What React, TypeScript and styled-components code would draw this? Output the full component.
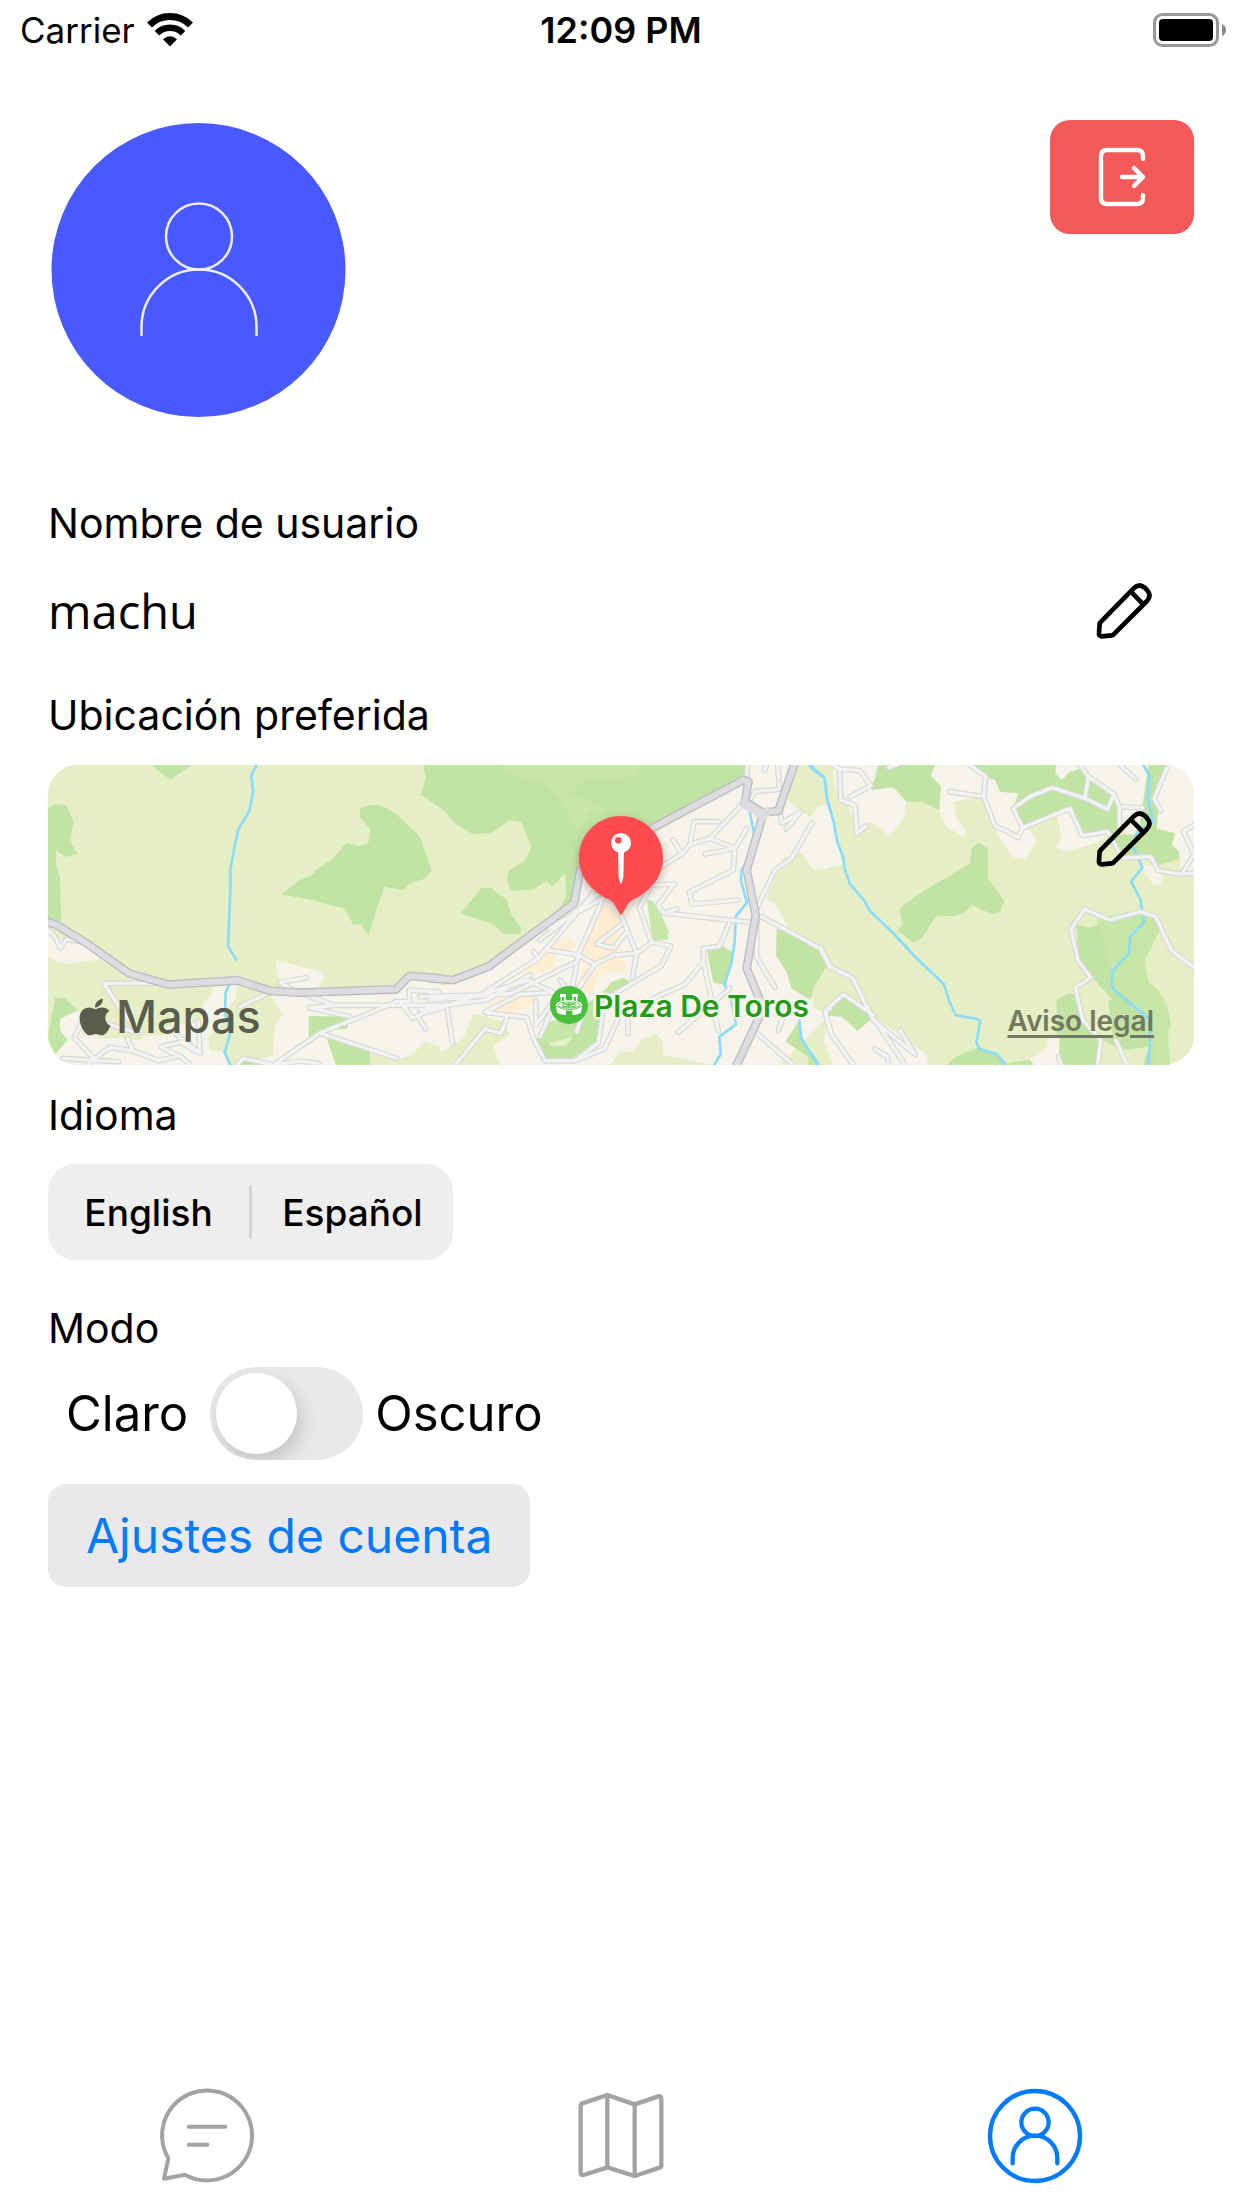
import React, { useState } from "react";
import styled, { createGlobalStyle } from "styled-components";
import { FaApple } from "react-icons/fa";

const blue = "#007aff";
const grey = "#a3a3a3";

const GlobalStyle = createGlobalStyle`
  * { box-sizing: border-box; }
  body { margin: 0; background: #fff; color: #000; font-family: Inter, "Liberation Sans", sans-serif; }
  button { font: inherit; color: inherit; border: 0; background: none; padding: 0; cursor: pointer; }
  p, h2 { margin: 0; }
  svg { display: block; }
`;

const Screen = styled.div`
  display: flex;
  flex-direction: column;
  min-height: 100vh;
`;

const StatusBar = styled.header`
  display: grid;
  grid-template-columns: 1fr auto 1fr;
  align-items: center;
  height: 60px;
  padding: 0 16px;
  font-size: 36px;
  line-height: 60px;
`;

const Carrier = styled.div`
  display: flex;
  align-items: center;
  gap: 12px;
  padding-left: 4px;
  font-size: 35px;
`;

const Clock = styled.time`
  font-weight: 600;
`;

const BatterySlot = styled.div`
  justify-self: end;
`;

const Main = styled.main`
  flex: 1;
  padding: 60px 48px 0;
`;

const ProfileHeader = styled.div`
  display: flex;
  justify-content: space-between;
  align-items: flex-start;
`;

const LogoutButton = styled.button`
  display: grid;
  place-items: center;
  width: 144px;
  height: 114px;
  border-radius: 20px;
  background: #f35959;
`;

const Section = styled.section<{ $space: number; $gap?: number }>`
  display: flex;
  flex-direction: column;
  align-items: stretch;
  gap: ${(p) => p.$gap ?? 24}px;
  margin-top: ${(p) => p.$space}px;
`;

const Label = styled.h2`
  font-size: 41px;
  font-weight: 400;
  line-height: 50px;
`;

const NameRow = styled.div`
  display: flex;
  align-items: center;
  justify-content: space-between;
  height: 78px;
  padding-right: 42px;
`;

const UserName = styled.p`
  font-family: "Open Sans", "Noto Sans", sans-serif;
  font-size: 47px;
  line-height: 64px;
`;

const IconButton = styled.button`
  display: block;
`;

const MapCard = styled.div`
  position: relative;
  height: 300px;
  border-radius: 30px;
  overflow: hidden;
  background: #e5eec5;
`;

const MapCanvas = styled.svg`
  width: 100%;
  height: 100%;
`;

const MapEdit = styled(IconButton)`
  position: absolute;
  top: 46px;
  right: 42px;
`;

const MapBrand = styled.div`
  position: absolute;
  left: 26px;
  bottom: 18px;
  display: flex;
  align-items: center;
  color: #5a5d4b;
  font-size: 45px;
  font-weight: 500;
  line-height: 60px;
`;

const LegalLink = styled.a`
  position: absolute;
  right: 40px;
  bottom: 28px;
  color: #737961;
  font-size: 28px;
  font-weight: 600;
  line-height: 32px;
  text-decoration-thickness: 3px;
  text-underline-offset: 4px;
`;

const PlaceLabel = styled.p`
  position: absolute;
  left: calc(50% - 27px);
  top: 223px;
  color: #229c16;
  font-size: 30px;
  font-weight: 600;
  line-height: 36px;
  white-space: nowrap;
  text-shadow: 0 0 3px #fff, 2px 2px 2px #f6f3ea, -2px -2px 2px #f6f3ea, 2px -2px 2px #f6f3ea, -2px 2px 2px #f6f3ea;
`;

const Segments = styled.div`
  display: flex;
  align-items: center;
  align-self: flex-start;
  height: 96px;
  border-radius: 27px;
  background: #eee;
`;

const Segment = styled.button`
  width: 201px;
  height: 96px;
  font-size: 37px;
  font-weight: 500;
`;

const Divider = styled.span`
  width: 3px;
  height: 54px;
  border-radius: 2px;
  background: #d3d3d4;
`;

const ModeRow = styled.div`
  display: flex;
  align-items: center;
  font-size: 49px;
  line-height: 93px;
  padding-left: 18px;
`;

const Switch = styled.input`
  appearance: none;
  flex: none;
  width: 153px;
  height: 93px;
  margin: 0 12px 0 22px;
  padding: 6px;
  border-radius: 47px;
  background: #e9e9eb;
  overflow: hidden;
  cursor: pointer;

  &::before {
    content: "";
    display: block;
    width: 81px;
    height: 81px;
    border-radius: 50%;
    background: #fff;
    box-shadow: 4px 9px 20px rgba(0, 0, 0, 0.16);
  }
  &:checked { background: #34c759; }
  &:checked::before { margin-left: 60px; }
`;

const SettingsButton = styled.button`
  align-self: flex-start;
  height: 103px;
  margin-top: 10px;
  padding: 0 38px;
  border-radius: 18px;
  background: #e9e9eb;
  color: ${blue};
  font-size: 48px;
`;

const TabBar = styled.nav`
  display: grid;
  grid-template-columns: repeat(3, 1fr);
  padding: 24px 0;
`;

const Tab = styled.button<{ $active?: boolean }>`
  display: grid;
  place-items: center;
  color: ${(p) => (p.$active ? blue : grey)};
`;

const line = {
  fill: "none",
  stroke: "currentColor",
  strokeLinecap: "round",
  strokeLinejoin: "round",
} as const;

const WifiIcon = () => (
  <svg width="46" height="34" viewBox="0 0 46 34" fill="none" stroke="#000" aria-hidden="true">
    <path d="M2.5 12A29 29 0 0 1 43.500 12" strokeWidth="7" />
    <path d="M10 20.200A18.400 18.400 0 0 1 36 20.200" strokeWidth="6.500" />
    <path d="M23 33.500L16 26.200Q23 20.500 30 26.200Z" fill="#000" stroke="none" />
  </svg>
);

const BatteryIcon = () => (
  <svg width="74" height="34" viewBox="0 0 74 34" aria-label="Battery full" role="img">
    <rect x="2.500" y="1.500" width="63" height="31" rx="8" fill="none" stroke="#999" strokeWidth="3" />
    <rect x="7" y="6" width="54" height="22" rx="4" />
    <path d="M70 11Q74 13 74 17T70 23Z" fill="#888" />
  </svg>
);

const Avatar = () => (
  <svg width="300" height="300" viewBox="0 0 300 300" role="img" aria-label="Avatar">
    <circle cx="150.500" cy="150" r="147" fill="#485aff" />
    <g fill="none" stroke="#eef" strokeWidth="2.500" strokeLinecap="round">
      <circle cx="151" cy="116.500" r="33" />
      <path d="M93.500 215V207A57.500 57.500 0 0 1 208.500 207V215" />
    </g>
  </svg>
);

const LogoutIcon = () => (
  <svg {...line} width="50" height="62" viewBox="291 438 150 186" stroke="#fff" strokeWidth="13" aria-hidden="true">
    <path d="M429 477V468Q429 450 411 450H321Q303 450 303 468V594Q303 612 321 612H411Q429 612 429 594V585" />
    <path d="M366 531H429M402 504L429 531L402 558" />
  </svg>
);

const PencilIcon = () => (
  <svg {...line} width="56" height="56" viewBox="134 68 168 168" strokeWidth="14" aria-hidden="true">
    <path d="M147 186L247 84Q263 68 280 82L287 89Q302 106 287 122L187 222Q185 225 181 225L152 228Q142 228 143 218L145 190Q145 188 147 186Z" />
    <path d="M241 96L273 129" />
  </svg>
);

const ChatIcon = () => (
  <svg {...line} width="96" height="96" viewBox="87 83 288 288" strokeWidth="12" aria-hidden="true">
    <path d="M115 294A135 135 0 1 1 165 343L102 355Z" />
    <path d="M176 199H286M176 253H232" />
  </svg>
);

const FoldedMapIcon = () => (
  <svg {...line} width="96" height="96" viewBox="69 83 288 288" strokeWidth="13" aria-hidden="true">
    <path d="M92 136Q92 131 97 129L172 104L254 132L325 108Q334 106 334 115V316Q334 320 329 322L254 347L172 321L101 344Q92 346 92 337Z" />
    <path d="M172 104V321M254 132V347" />
  </svg>
);

const ProfileIcon = () => (
  <svg {...line} width="96" height="96" viewBox="81 83 288 288" strokeWidth="13" aria-hidden="true">
    <circle cx="225" cy="227" r="135" />
    <circle cx="225" cy="186" r="41" />
    <path d="M158 309V293A67 67 0 0 1 292 293V309" />
  </svg>
);

/* The map is drawn as three side by side tiles, three units to a pixel. */
const tiles = ["translate(-24 -30)", "translate(1146 -30)", "translate(2286 -30)"];

const Tiled = ({ paths, ...rest }: { paths: string[] } & React.SVGProps<SVGGElement>) => (
  <g {...rest}>
    {paths.map((d, i) => (
      <path key={i} d={d} transform={tiles[i]} />
    ))}
  </g>
);

const town = [
  "M24 530L75 560L130 570L210 592L170 615L90 627L50 621L24 603ZM24 930V880L50 895L82 855L60 825V792L110 768L180 775L120 832L190 852L245 848L305 858L312 842L380 840L380 815L480 800L490 740L512 722L516 697L592 690L588 730L560 760L540 820L505 845L510 888L550 890L570 930ZM706 616L845 650L852 668L835 695L1070 715L1110 670L1200 672V930H600L700 900L700 860L705 815L727 778L695 725L722 700Z",
  "M-30 690L70 690L175 640L440 450L460 360L940 80L950 30H1095L1070 135L1145 190L1170 155L1200 150V340L1150 345L1110 290L1060 310L1008 432L1040 450L1130 640L1150 760L1200 780L1120 860L1050 930H850L700 900L698 860L680 838L640 850L610 890L570 890L540 930H210L190 870L240 840L220 800L130 775L100 850L20 900L-30 880Z",
  "M70 30H210L185 105L250 97L290 140L280 190L240 242L180 200L150 235L100 120L80 110L70 80ZM0 185L30 150L55 150L98 330L15 345L0 320ZM375 30H490L560 60L570 110L630 115L610 160L635 215L670 235L678 262L645 312L605 305L560 235L540 180L510 125L430 140L435 180L468 232L462 246L410 215L385 165L393 95L363 62ZM738 30H1152V362L1115 365L1107 290L1085 270L1095 235L1045 220L1000 240L930 230L740 100ZM740 180L755 248L738 278L765 290L865 262L900 235L780 150ZM985 325L1045 335L1058 360L1050 392L1030 390ZM55 780L130 790L180 775L350 900L355 930H70L42 860ZM662 912L710 875L715 845L745 842L748 875L780 862L803 875L760 905V930H670ZM0 735L10 760L0 790Z",
];

const woods = [
  "M24 160L45 147L78 150L101 200L90 257L113 296L76 306L48 286V330L60 370L64 500L24 490ZM333 30L391 74L455 30ZM1150 30L1157 70L1142 120L1200 155V30ZM723 419L775 377L820 358L828 345L880 309L919 264L958 273L985 265L991 222L961 188L960 160L985 150L1020 151L1064 173L1138 242L1175 345L1158 370L1110 385L1090 405L1033 395L1010 460L986 543L962 507L940 510L912 458L870 451L820 435ZM45 728L75 730L113 766L60 792V825L82 855L46 897L24 850ZM806 783L935 785L920 822L845 825L806 865ZM860 850L990 890V930H888ZM575 930L610 908L700 930Z",
  "M0 30H945L940 70L670 220L455 350L440 440L375 483L408 425L405 355L367 396L350 377L312 403L243 409L229 367L238 346L284 318L304 275L274 202L238 196L185 233L128 238L72 203L45 170L0 137ZM155 398L187 400L203 416L230 432L244 480L276 520L270 536L222 537L188 508L92 475ZM830 585L872 570L908 590L890 690L850 683ZM1040 520L1170 585L1188 635L1150 700L1140 735L1085 700L1068 648L1038 600ZM1108 795L1120 850L1165 930H1135V905L1066 860ZM530 700L545 680L580 668L606 685L520 760L510 850L430 910L345 910L312 860L360 800L430 780Z",
  "M490 30H738L735 55L755 75L780 50L815 40L915 120L930 240L985 240L1015 30H1075L1035 130L1045 165L1040 222L1095 235L1085 270L1107 290V312L1045 330L1015 305L940 305L890 235L815 240L780 160L635 218L610 160L625 115L570 110L555 75L525 65ZM205 30H375L363 62L393 95L388 165L340 142L290 140L250 97L185 105ZM505 263L533 280L534 370L583 438L570 470L545 477L486 450L465 472L435 482L378 484L335 550L308 562L264 527L277 508L269 465L280 450L330 415L480 326L485 280ZM800 510L840 517L862 512V490L900 495L985 470L1035 485L1050 525L1020 555L1003 620L1015 680L1045 705L1073 755L1083 812L1070 835L1080 930H745L750 850L740 835V735L775 715L800 720L820 800L870 850L910 850L895 738L907 735L845 665L805 610ZM412 930L435 907L505 877L560 897L590 925L660 914L670 930ZM60 765L100 718L175 770L180 795L143 828L95 785L55 782ZM0 565L45 625L10 700L0 740Z",
];

const clearings = [
  "M990 930V895L1075 912L1115 900L1155 860L1200 875V930Z",
  "M357 865L430 845L408 872L365 874Z",
  "M875 855L935 885L1018 875L1000 930H865Z",
];

const glades = ["", "M205 30H628L622 58L570 72L480 66L415 115L512 155L515 185L480 165L440 230L400 140L340 80L275 68L220 52ZM650 432L670 440L698 490L716 528L712 555L668 558ZM330 850L370 795L430 830L425 850L360 865Z", "M862 490L985 470L1035 485L1050 525L1003 620L1015 680L1070 750L1080 930H1040L1035 830L920 700Z"];

const shops = ["", "M520 445L560 470L570 550L590 652L545 650L495 670L490 720L440 700L460 640L455 590L500 480ZM275 655L320 605L410 540L440 575L375 600L378 640L290 665ZM170 740L270 690L330 735L240 778L200 775Z", ""];

const water = [
  "M650 30L634 60L639 110L628 168L594 225L580 295L571 345V410L567 500L564 573L589 614M567 690L557 712L555 770L571 835L554 892L571 930",
  "M958 165L973 240L950 320L934 347L933 378L951 443L917 484L914 560L903 630L883 688L900 720L918 808L868 845L872 897L853 930M1140 30L1184 70L1191 130L1202 170M1108 790L1113 850L1166 930",
  "M0 35L44 70L51 130L71 200L82 262L99 305L105 345L120 387L165 440L180 468L250 535L320 610L402 688L418 740L437 780L500 792L511 797L499 862L508 882L560 897L588 930M1000 30L1019 62L1013 130L1030 200L1012 214L985 225L967 270L997 337L963 380L991 433L1002 502L960 545L957 595L909 645L903 688L912 704L1015 790L1021 855L1014 930M-2 890L26 930",
];

const streets = [
  "M24 525L45 545L61 580L80 553L140 562M385 685H192L230 745L295 834L133 787L103 848L163 912L210 877L280 888L355 917L420 902L450 930M68 910L235 920M163 912L145 930M262 850L280 888M405 835L480 895L475 800M480 895L420 862L362 876L420 905M590 930L610 910L700 930L840 834L1060 745M600 755L690 712M798 668L720 683L775 712L885 751H1200M885 751L808 758L930 785M840 834L1070 910M1195 711L1108 705V740H1065M1085 745L1117 790L1200 750M1135 785L1156 822M700 930L780 918L835 925",
  "M0 712H22M-30 725L150 720L300 675M-30 765L50 750L170 735L300 660M50 750L68 865M0 770L160 715L325 610L490 415M325 610L310 590M330 555L520 405M355 520L520 430L445 600L355 585M0 735L245 715L440 620M445 600L425 710M300 680L370 712L270 718L165 772L290 787L310 850L345 917H435L505 865L520 760L540 725L695 632L722 573L665 562L620 595L550 600L495 628L445 700M445 600L495 628M75 930L165 822L213 835L230 790M317 740L318 810L380 725M330 845L400 690M435 917L523 882L565 790M573 480L620 595L607 670M573 510L500 567L552 580L590 530M665 562L628 457L665 390L733 387L684 450L700 474L740 462M700 474L970 503M695 335L755 297L780 268L840 250L935 150M730 255L755 297M780 268L792 200H865M840 250L915 280L825 297M915 280L950 220M915 280L910 345L778 412L787 447L925 435M900 500L868 575L820 580V620L865 828M820 620L765 688L592 765L595 835M900 700L745 832M995 485L1170 580L1200 630M975 470L1035 345L1085 310L1145 205M1050 170L1055 205L1110 172L1068 222M960 135L975 110L1048 103L1043 30M980 490V608L1035 697M975 830L1090 930M1045 825L1065 770M953 30L945 140M1003 45L1010 30M390 675L460 770L440 830M1200 760L1185 770L1200 830",
  "M70 30L88 42L150 47L183 92L120 125M88 42L93 135L135 152L141 235L168 213M235 37L260 30M480 30L527 65L521 125L418 110M521 125L555 213L590 228L623 248L638 218L780 160L817 242L893 230L938 309L1022 305L1045 347L1115 358L1152 354M638 218L610 160L660 125L727 98L825 130L892 163L912 118L835 65L810 30M825 130L835 65M912 118L928 155L998 159M928 155V215M930 30L977 72M1075 30L1032 130L1052 167M1152 210L1120 229L1152 298L1115 358M0 565L33 580L58 635L128 668L190 795L315 898L270 825M195 795L285 930M190 780L100 718L45 768L66 840L130 930M195 882L232 905L236 930M1152 637L1085 587L1037 485L990 470L900 495L823 463L783 523L803 615L843 668L796 697L818 795L872 855L863 930M918 855L950 930M745 905L755 930",
];

const highways = [
  "M20 500L50 510L140 565L267 655L385 689L592 676L693 708L780 713L1068 703L1108 663L1200 670",
  "M0 670L70 675L175 635L433 444L450 345M600 262L675 215L940 75M940 75L955 80L945 140L1000 175L950 345L977 480L950 640L1000 760L920 930M1000 172L1045 168L1092 30",
  "",
];

const MapArtwork = () => (
  <MapCanvas viewBox="0 0 3438 900" preserveAspectRatio="xMidYMid slice" aria-hidden="true">
    <rect width="3438" height="900" fill="#e5eec5" />
    <Tiled paths={town} fill="#f6f3ea" />
    <Tiled paths={woods} fill="#c1e4a5" />
    <Tiled paths={glades} fill="#c6e7a8" />
    <Tiled paths={clearings} fill="#e5eec5" />
    <Tiled paths={shops} fill="#fdeed3" />
    <g fill="none" strokeLinecap="round" strokeLinejoin="round">
      <Tiled paths={water} stroke="#8bdcfb" strokeWidth="8" />
      <Tiled paths={streets} stroke="#d6d9d5" strokeWidth="17" />
      <Tiled paths={streets} stroke="#f1f3f3" strokeWidth="10" />
      <Tiled paths={highways} stroke="#bbbbc0" strokeWidth="26" />
      <Tiled paths={highways} stroke="#dcdde1" strokeWidth="18" />
    </g>
    <g transform={tiles[1]}>
      <path d="M940 145L1000 182L1010 172" fill="none" stroke="#dcdde1" strokeWidth="26" strokeLinecap="round" />
      <circle cx="417" cy="750" r="57" fill="#48c03b" />
      <g fill="#fff">
        <path d="M390 717H408V726H390ZM426 717H444V726H426Z" />
        <path d="M392 726H396V738H392ZM403 726H407V738H403ZM427 726H431V738H427ZM438 726H442V738H438Z" />
        <path d="M377 749Q417 775 457 749L453 773Q442 780 427 780V767H408V780Q392 780 381 773Z" />
        <ellipse cx="417" cy="749" rx="39" ry="13" />
      </g>
      <g fill="none" stroke="#48c03b" strokeWidth="2.500">
        <ellipse cx="417" cy="750" rx="34" ry="9" />
        <ellipse cx="417" cy="751" rx="21" ry="5" />
        <path d="M378 754Q417 774 456 754M417 741V760M397 744L437 757M437 744L397 757" />
      </g>
      <g style={{ filter: "drop-shadow(0 9px 12px rgba(80, 50, 40, .35))" }}>
        <path d="M573 183C643 183 699 239 699 308C699 363 665 407 610 433Q596 440 590 452Q581 470 573 481Q565 470 556 452Q550 440 536 433C481 407 447 363 447 308C447 239 503 183 573 183Z" fill="#ff4b50" />
      </g>
      <path d="M564 288H582L580 365Q576 386 573 386T566 365Z" fill="#fff" />
      <circle cx="573" cy="264" r="30" fill="#fff" />
      <circle cx="565" cy="256" r="10" fill="#ff4b50" />
    </g>
  </MapCanvas>
);

export default function App() {
  const [dark, setDark] = useState(false);

  return (
    <Screen>
      <GlobalStyle />
      <StatusBar>
        <Carrier>
          Carrier
          <WifiIcon />
        </Carrier>
        <Clock>12:09 PM</Clock>
        <BatterySlot>
          <BatteryIcon />
        </BatterySlot>
      </StatusBar>

      <Main>
        <ProfileHeader>
          <Avatar />
          <LogoutButton aria-label="Cerrar sesión">
            <LogoutIcon />
          </LogoutButton>
        </ProfileHeader>

        <Section $space={78}>
          <Label>Nombre de usuario</Label>
          <NameRow>
            <UserName>machu</UserName>
            <IconButton aria-label="Editar nombre">
              <PencilIcon />
            </IconButton>
          </NameRow>
        </Section>

        <Section $space={40} $gap={25}>
          <Label>Ubicación preferida</Label>
          <MapCard>
            <MapArtwork />
            <PlaceLabel>Plaza De Toros</PlaceLabel>
            <MapBrand>
              <FaApple size={42} aria-hidden="true" />
              Mapas
            </MapBrand>
            <LegalLink href="#legal">Aviso legal</LegalLink>
            <MapEdit aria-label="Editar ubicación">
              <PencilIcon />
            </MapEdit>
          </MapCard>
        </Section>

        <Section $space={25}>
          <Label id="language">Idioma</Label>
          <Segments role="group" aria-labelledby="language">
            <Segment>English</Segment>
            <Divider />
            <Segment>Español</Segment>
          </Segments>
        </Section>

        <Section $space={43} $gap={14}>
          <Label>Modo</Label>
          <ModeRow>
            <span>Claro</span>
            <Switch
              id="dark-mode"
              type="checkbox"
              role="switch"
              checked={dark}
              onChange={(e) => setDark(e.target.checked)}
            />
            <label htmlFor="dark-mode">Oscuro</label>
          </ModeRow>
          <SettingsButton>Ajustes de cuenta</SettingsButton>
        </Section>
      </Main>

      <TabBar>
        <Tab aria-label="Mensajes">
          <ChatIcon />
        </Tab>
        <Tab aria-label="Mapa">
          <FoldedMapIcon />
        </Tab>
        <Tab $active aria-label="Perfil" aria-current="page">
          <ProfileIcon />
        </Tab>
      </TabBar>
    </Screen>
  );
}
